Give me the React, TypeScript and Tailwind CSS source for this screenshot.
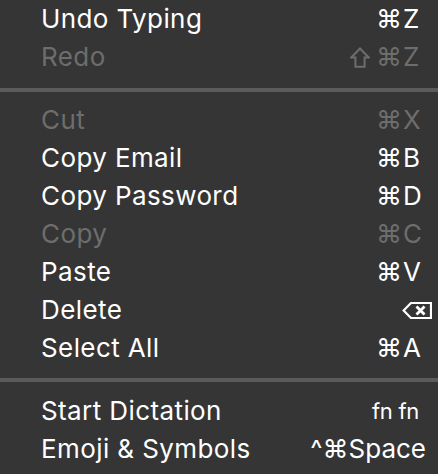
import React from "react";

type Item =
  | { sep: true }
  | {
      sep?: false;
      label: string;
      disabled?: boolean;
      mods?: React.ReactNode;
      keyc?: React.ReactNode;
      custom?: React.ReactNode;
    };

const Shift = () => (
  <svg width="20" height="21" viewBox="0 0 20 21" className="inline-block mr-[6px]">
    <path
      d="M10 1.5 L18.8 10.5 H14.6 V19.8 H5.4 V10.5 H1.2 Z"
      fill="none"
      stroke="currentColor"
      strokeWidth="2"
      strokeLinejoin="miter"
    />
  </svg>
);

const Del = () => (
  <svg width="30" height="17" viewBox="0 0 30 17" className="block">
    <path
      d="M1.6 8.5 L9 1 H29 V16 H9 Z"
      fill="none"
      stroke="currentColor"
      strokeWidth="2.2"
      strokeLinejoin="miter"
    />
    <path
      d="M14.5 4.5 L22.5 12.5 M22.5 4.5 L14.5 12.5"
      stroke="currentColor"
      strokeWidth="2.8"
    />
  </svg>
);

const items: Item[] = [
  { label: "Undo Typing", mods: "⌘", keyc: "Z" },
  { label: "Redo", disabled: true, mods: <><Shift />⌘</>, keyc: "Z" },
  { sep: true },
  { label: "Cut", disabled: true, mods: "⌘", keyc: "X" },
  { label: "Copy Email", mods: "⌘", keyc: "B" },
  { label: "Copy Password", mods: "⌘", keyc: "D" },
  { label: "Copy", disabled: true, mods: "⌘", keyc: "C" },
  { label: "Paste", mods: "⌘", keyc: "V" },
  { label: "Delete", custom: <span className="mr-[6px] flex items-center"><Del /></span> },
  { label: "Select All", mods: "⌘", keyc: "A" },
  { sep: true },
  { label: "Start Dictation", custom: <span className="mr-[19px] text-[22px] tracking-[-0.3px]">fn fn</span> },
  { label: "Emoji & Symbols", custom: <span className="mr-[12px]">^⌘Space</span> },
];

export default function App() {
  let sepCount = 0;
  return (
    <div
      className="w-[438px] h-[474px] bg-[#353535] text-white overflow-hidden"
      style={{ fontFamily: "Inter, 'DejaVu Sans', sans-serif" }}
    >
      <div className="flex flex-col">
        {items.map((it, i) => {
          if (it.sep) {
            sepCount++;
            return (
              <div
                key={i}
                className={
                  sepCount === 1
                    ? "h-[4px] bg-[#5b5b5b] mt-[12px] mb-[9px]"
                    : "h-[4px] bg-[#5b5b5b] mt-[11px] mb-[10px]"
                }
              />
            );
          }
          return (
            <div
              key={i}
              className={
                "flex items-center h-[38px] text-[26px] leading-[38px] pl-[41px] " +
                (it.disabled ? "text-[#6d6d6d]" : "text-white")
              }
            >
              <span className="flex-1 whitespace-nowrap tracking-[0.4px]">{it.label}</span>
              {it.custom ? (
                it.custom
              ) : (
                <span className="flex items-center">
                  <span className="flex items-center">{it.mods}</span>
                  <span className="w-[36px] text-left pl-[1px]">{it.keyc}</span>
                </span>
              )}
            </div>
          );
        })}
      </div>
    </div>
  );
}
